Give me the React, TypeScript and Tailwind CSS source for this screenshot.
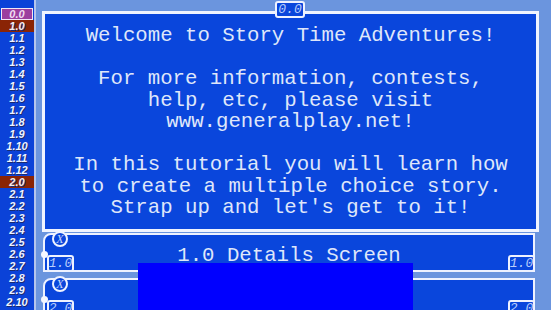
import React from 'react'

const mono = { fontFamily: '"Liberation Mono", "Courier New", monospace' }

const sections = [
  '0.0', '1.0', '1.1', '1.2', '1.3', '1.4', '1.5', '1.6', '1.7', '1.8', '1.9', '1.10', '1.11', '1.12',
  '2.0', '2.1', '2.2', '2.3', '2.4', '2.5', '2.6', '2.7', '2.8', '2.9', '2.10',
]

function Tag({ label, className }: { label: string; className: string }) {
  return (
    <div
      className={`absolute h-[17px] w-[27px] rounded-[3px] border-2 border-[#eef2ff] bg-[#0a46dc] text-[13px] leading-[13px] italic text-[#b9cdfb] flex items-center justify-center ${className}`}
      style={mono}
    >
      {label}
    </div>
  )
}

function SceneCard({ label, title }: { label: string; title?: string }) {
  return (
    <div className="relative ml-[1px] h-[39px] w-[492px] shrink-0 rounded-tl-[8px] border-2 border-[#eef2ff] bg-[#0a46dc]">
      {title && (
        <div
          className="pt-[10px] text-center text-[20.7px] leading-[22px] text-[#dfe6fa]"
          style={mono}
        >
          {title}
        </div>
      )}
      {/* delete button */}
      <div
        className="absolute -top-[4px] left-[7px] h-[16px] w-[16px] rounded-full border-2 border-[#eef2ff] bg-[#0a46dc] flex items-center justify-center text-[12px] leading-none italic text-[#c5d4fb]"
        style={{ fontFamily: '"Liberation Serif", serif' }}
      >
        X
      </div>
      <div className="absolute -left-[4px] top-[16px] h-[7px] w-[7px] rounded-full bg-[#f4f6ff]" />
      <Tag label={label} className="left-[2px] -bottom-[2px]" />
      <Tag label={label} className="-right-[2px] -bottom-[2px]" />
    </div>
  )
}

export default function App() {
  return (
    <div className="relative flex h-[310px] w-[551px] overflow-hidden bg-[#6b95de]">
      {/* Section list */}
      <div className="w-[36px] shrink-0 border-r-2 border-[#b4c4ec] bg-[#0b42d8] pt-[7px]">
        {sections.map((s) => {
          const first = s === '0.0'
          const chapter = s === '1.0' || s === '2.0'
          return (
            <div
              key={s}
              className={`flex h-[12px] items-center justify-center text-[11px] font-bold italic leading-none ${
                first
                  ? 'mx-[1px] mt-[1px] h-[11px] border border-[#f2e6f5] bg-[#9c3f9f] text-[#f0dcf2]'
                  : chapter
                    ? 'bg-[#8a2405] text-[#f4eeee]'
                    : 'text-[#eef2ff]'
              }`}
              style={{
                fontFamily: '"Liberation Sans", Arial, sans-serif',
                textShadow: first ? 'none' : '1px 1px 0 #1a2a70',
              }}
            >
              {s}
            </div>
          )
        })}
      </div>

      {/* Main column */}
      <div className="flex shrink-0 flex-col pl-[6px] pt-[11px]">
        <div
          className="h-[221px] w-[497px] shrink-0 border-[3px] border-[#f0f4ff] bg-[#0a46dc] pt-[11px] text-center text-[20.7px] leading-[21.5px] text-[#dfe6fa]"
          style={mono}
        >
          <div>Welcome to Story Time Adventures!</div>
          <div>&nbsp;</div>
          <div>For more information, contests,</div>
          <div>help, etc, please visit</div>
          <div>www.generalplay.net!</div>
          <div>&nbsp;</div>
          <div>In this tutorial you will learn how</div>
          <div>to create a multiple choice story.</div>
          <div>Strap up and let's get to it!</div>
        </div>

        <div className="mt-[1px] flex shrink-0 flex-col gap-[6px]">
          <SceneCard label="1.0" title="1.0 Details Screen" />
          <SceneCard label="2.0" />
        </div>
      </div>

      {/* current section tag */}
      <div
        className="absolute left-[275px] top-[1px] flex h-[17px] w-[30px] items-center justify-center rounded-[3px] border-2 border-[#eef2ff] bg-[#0a46dc] text-[13px] italic leading-none text-[#b9cdfb]"
        style={mono}
      >
        0.0
      </div>

      {/* blank overlay block */}
      <div className="absolute left-[138px] top-[263px] h-[47px] w-[275px] bg-[#0000ff]" />
    </div>
  )
}
